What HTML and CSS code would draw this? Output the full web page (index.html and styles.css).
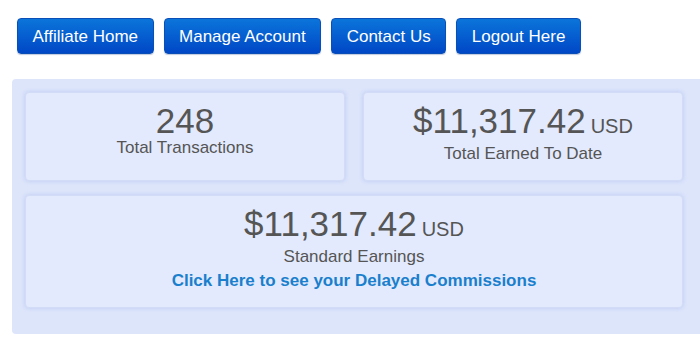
FILE: index.html
```html
<!DOCTYPE html>
<html>
<head>
<meta charset="utf-8">
<link rel="stylesheet" href="styles.css">
</head>
<body>
<nav class="nav">
  <a class="btn" href="#">Affiliate Home</a>
  <a class="btn" href="#">Manage Account</a>
  <a class="btn" href="#">Contact Us</a>
  <a class="btn" href="#">Logout Here</a>
</nav>
<section class="panel">
  <div class="card">
    <div class="value">248</div>
    <div class="label">Total Transactions</div>
  </div>
  <div class="card">
    <div class="value">$11,317.42<span class="unit">USD</span></div>
    <div class="label">Total Earned To Date</div>
  </div>
  <div class="card wide">
    <div class="value">$11,317.42<span class="unit">USD</span></div>
    <div class="label">Standard Earnings</div>
    <a class="link" href="#">Click Here to see your Delayed Commissions</a>
  </div>
</section>
</body>
</html>
```
FILE: styles.css
```css
html, body {
  margin: 0;
  padding: 0;
  background: #ffffff;
  font-family: "Liberation Sans", Arial, sans-serif;
}
.nav {
  display: flex;
  gap: 10px;
  padding: 18px 0 0 17px;
  height: 36px;
}
.btn {
  display: flex;
  align-items: center;
  box-sizing: border-box;
  height: 36px;
  padding: 1px 14.5px 0;
  border: 1px solid #0a4fb8;
  border-radius: 4px;
  background: linear-gradient(#0b75da, #0047c6);
  color: #ffffff;
  font-size: 17px;
  text-decoration: none;
  box-shadow: 0 1px 1px rgba(0, 40, 120, 0.25);
}
.panel {
  margin: 25px 0 0 12px;
  padding: 13px 17px 26px 13px;
  background: #dde5fb;
  border-radius: 4px 0 0 4px;
  display: grid;
  grid-template-columns: 320px 320px;
  column-gap: 18px;
  row-gap: 14px;
}
.card {
  display: flex;
  flex-direction: column;
  align-items: center;
  padding: 10px 0 16px;
  background: #e3eafd;
  border: 1px solid #d2dcf7;
  border-radius: 4px;
  box-shadow: 0 0 4px rgba(150, 170, 230, 0.45);
  color: #555555;
}
.wide {
  grid-column: 1 / 3;
}
.value {
  font-size: 35px;
  line-height: 35px;
}
.unit {
  margin-left: 5px;
  font-size: 20px;
}
.label {
  font-size: 17px;
}
.link {
  margin-top: 4px;
  font-size: 17px;
  font-weight: bold;
  color: #1a7fcc;
  text-decoration: none;
}
```
